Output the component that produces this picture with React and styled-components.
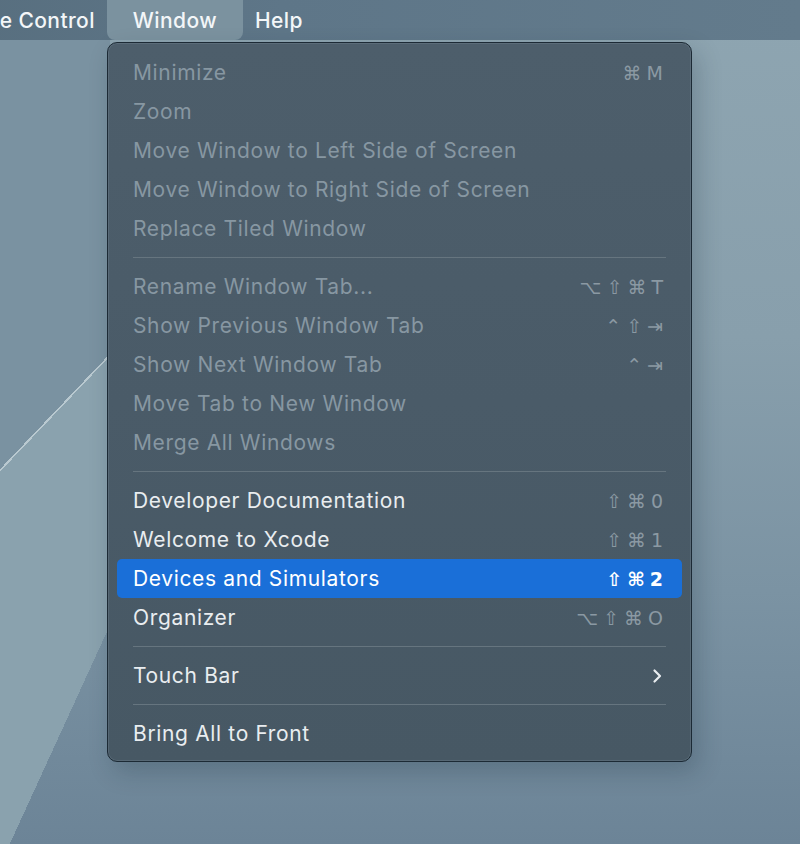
import React from "react";
import styled, { createGlobalStyle } from "styled-components";

const GlobalStyle = createGlobalStyle`
  html, body {
    margin: 0;
    padding: 0;
  }
  body {
    font-family: Inter, "Noto Sans", "DejaVu Sans", sans-serif;
    -webkit-font-smoothing: antialiased;
  }
`;

const MENU = [
  [
    { label: "Minimize", keys: "⌘M", disabled: true },
    { label: "Zoom", disabled: true },
    { label: "Move Window to Left Side of Screen", disabled: true },
    { label: "Move Window to Right Side of Screen", disabled: true },
    { label: "Replace Tiled Window", disabled: true },
  ],
  [
    { label: "Rename Window Tab...", keys: "⌥⇧⌘T", disabled: true },
    { label: "Show Previous Window Tab", keys: "⌃⇧⇥", disabled: true },
    { label: "Show Next Window Tab", keys: "⌃⇥", disabled: true },
    { label: "Move Tab to New Window", disabled: true },
    { label: "Merge All Windows", disabled: true },
  ],
  [
    { label: "Developer Documentation", keys: "⇧⌘0" },
    { label: "Welcome to Xcode", keys: "⇧⌘1" },
    { label: "Devices and Simulators", keys: "⇧⌘2", active: true },
    { label: "Organizer", keys: "⌥⇧⌘O" },
  ],
  [{ label: "Touch Bar", submenu: true }],
  [{ label: "Bring All to Front" }],
];

function Chevron() {
  return (
    <svg width="12" height="18" viewBox="0 0 12 18" fill="none">
      <path
        d="M3.5 3.5 L9 9 L3.5 14.5"
        stroke="#e9edf0"
        strokeWidth="2.2"
        strokeLinecap="round"
        strokeLinejoin="round"
      />
    </svg>
  );
}

function WindowMenu() {
  return (
    <StyledDesktop>
      <GlobalStyle />
      <StyledMenuBar>
        <StyledTitle>Source Control</StyledTitle>
        <StyledTitle $open>Window</StyledTitle>
        <StyledTitle>Help</StyledTitle>
      </StyledMenuBar>
      <StyledPanel>
        {MENU.map((group, gi) => (
          <React.Fragment key={gi}>
            {gi > 0 && <StyledSeparator />}
            {group.map((item) => (
              <StyledRow
                key={item.label}
                $active={item.active}
                $disabled={item.disabled}
              >
                <span>{item.label}</span>
                {item.keys && (
                  <StyledKeys $active={item.active}>
                    {item.keys.split("").map((k, i) => (
                      <span key={i}>{k}</span>
                    ))}
                  </StyledKeys>
                )}
                {item.submenu && <Chevron />}
              </StyledRow>
            ))}
          </React.Fragment>
        ))}
      </StyledPanel>
    </StyledDesktop>
  );
}

// wallpaper: two diagonal facets on the left strip over a vertical wash
const StyledDesktop = styled.div`
  width: 800px;
  height: 844px;
  overflow: hidden;
  display: flex;
  flex-direction: column;
  background-color: #7d94a3;
  background-image:
    linear-gradient(133.6deg, #7a92a1 0 48.9%, #b9c9d0 48.9% 49.15%, transparent 49.15%),
    linear-gradient(114.6deg, #8aa2ae 0 79.8%, transparent 79.8%),
    linear-gradient(180deg, #8ea5b1 0%, #889fac 40%, #7b93a3 70%, #6c8497 100%);
  background-size: 110px 844px, 110px 844px, 800px 844px;
  background-position: 0 0, 0 0, 0 0;
  background-repeat: no-repeat;
`;

const StyledMenuBar = styled.div`
  height: 40px;
  flex-shrink: 0;
  display: flex;
  align-items: stretch;
  gap: 12px;
  margin-left: -61px;
  background: linear-gradient(90deg, #576e7e 0%, #5e7688 40%, #637b8c 100%);
`;

const StyledTitle = styled.div`
  display: flex;
  align-items: center;
  padding: 0 ${(p) => (p.$open ? "26px" : "0")};
  color: #f3f6f8;
  font-size: 21px;
  font-weight: 500;
  letter-spacing: 0.4px;
  background: ${(p) => (p.$open ? "#7b929f" : "transparent")};
  border-radius: 0 0 8px 8px;
`;

const StyledPanel = styled.div`
  width: 585px;
  margin: 2px 0 0 107px;
  padding: 10px 9px 8px;
  box-sizing: border-box;
  border: 1px solid #1c2a35;
  border-radius: 10px;
  background: linear-gradient(180deg, #4d5e6b 0%, #4a5b68 50%, #475864 100%);
  box-shadow: inset 0 0 0 1px rgba(140, 160, 175, 0.22),
    6px 10px 24px rgba(20, 35, 50, 0.22);
`;

const StyledRow = styled.div`
  height: 39px;
  display: flex;
  align-items: center;
  justify-content: space-between;
  padding: 0 19px 0 16px;
  border-radius: 5px;
  font-size: 21px;
  letter-spacing: 0.65px;
  color: ${(p) =>
    p.$active ? "#ffffff" : p.$disabled ? "#8797a2" : "#e9edf0"};
  background: ${(p) => (p.$active ? "#1a6fd8" : "transparent")};
`;

const StyledKeys = styled.span`
  display: flex;
  gap: 5px;
  font-family: "DejaVu Sans", Inter, sans-serif;
  font-size: 19px;
  letter-spacing: 0;
  font-weight: ${(p) => (p.$active ? 700 : 400)};
  color: ${(p) => (p.$active ? "#ffffff" : "#8b99a3")};
`;

const StyledSeparator = styled.div`
  height: 1px;
  margin: 9px 16px 9px 16px;
  background: #66757f;
`;

export default WindowMenu;
